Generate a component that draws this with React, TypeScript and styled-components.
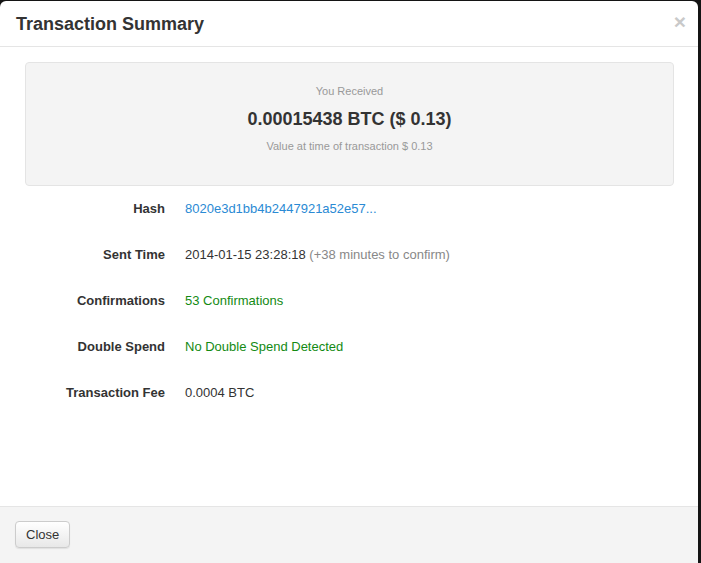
import React, { ReactElement } from "react";
import styled, { createGlobalStyle } from "styled-components";

const GlobalStyle = createGlobalStyle`
  html, body {
    margin: 0;
    padding: 0;
    background: #141414;
    font-family: "Liberation Sans", Arial, sans-serif;
    color: #333;
  }
`;

interface Row {
  label: string;
  value: string;
  tone?: "link" | "success" | "plain";
  note?: string;
}

const rows: Row[] = [
  { label: "Hash", value: "8020e3d1bb4b2447921a52e57...", tone: "link" },
  {
    label: "Sent Time",
    value: "2014-01-15 23:28:18",
    note: "(+38 minutes to confirm)",
  },
  { label: "Confirmations", value: "53 Confirmations", tone: "success" },
  { label: "Double Spend", value: "No Double Spend Detected", tone: "success" },
  { label: "Transaction Fee", value: "0.0004 BTC" },
];

const Modal = styled.div`
  margin-top: 1px;
  width: 698px;
  height: 562px;
  background: #fff;
  border-radius: 6px 6px 0 0;
  overflow: hidden;
  display: flex;
  flex-direction: column;
`;

const Header = styled.div`
  height: 45px;
  padding: 0 16px;
  border-bottom: 1px solid #e5e5e5;
  display: flex;
  align-items: center;
  justify-content: space-between;
`;

const Title = styled.h4`
  margin: 0;
  font-size: 18px;
  font-weight: bold;
  color: #333;
  line-height: 20px;
`;

const CloseX = styled.span`
  font-size: 21px;
  font-weight: bold;
  color: #c9c9c9;
  line-height: 1;
  margin-right: -4px;
  margin-top: -5px;
`;

const Body = styled.div`
  flex: 1;
  padding: 15px 24px 0 25px;
`;

const Well = styled.div`
  height: 124px;
  background: #f4f4f4;
  border: 1px solid #e4e4e4;
  border-radius: 4px;
  display: flex;
  flex-direction: column;
  align-items: center;
  padding-top: 21px;
  box-sizing: border-box;
`;

const Small = styled.div`
  font-size: 11px;
  color: #999;
  line-height: 14px;
`;

const Amount = styled.div`
  font-size: 18px;
  font-weight: bold;
  color: #333;
  line-height: 22px;
  margin: 10px 0 9px;
`;

const Details = styled.div`
  display: grid;
  grid-template-columns: 140px 1fr;
  grid-auto-rows: 46px;
  column-gap: 20px;
  font-size: 13px;
  line-height: 18px;
`;

const Label = styled.div`
  font-weight: bold;
  text-align: right;
  align-self: center;
  color: #333;
`;

const Value = styled.div<{ $tone: "link" | "success" | "plain" }>`
  align-self: center;
  color: ${({ $tone }): string =>
    $tone === "link" ? "#2a8ad4" : $tone === "success" ? "#138a13" : "#333"};
`;

const Note = styled.span`
  color: #888;
`;

const Footer = styled.div`
  height: 57px;
  border-top: 1px solid #e5e5e5;
  background: #f4f4f4;
  padding: 14px 15px 0;
  box-sizing: border-box;
`;

const Button = styled.button`
  font-family: "Liberation Sans", Arial, sans-serif;
  font-size: 13px;
  color: #333;
  height: 27px;
  padding: 0 10px;
  border: 1px solid #ccc;
  border-radius: 4px;
  background: linear-gradient(#ffffff, #e8e8e8);
  box-shadow: 0 1px 1px rgba(0, 0, 0, 0.08);
`;

const App = (): ReactElement => {
  return (
    <>
      <GlobalStyle />
      <Modal>
        <Header>
          <Title>Transaction Summary</Title>
          <CloseX>×</CloseX>
        </Header>
        <Body>
          <Well>
            <Small>You Received</Small>
            <Amount>0.00015438 BTC ($ 0.13)</Amount>
            <Small>Value at time of transaction $ 0.13</Small>
          </Well>
          <Details>
            {rows.map((row) => (
              <React.Fragment key={row.label}>
                <Label>{row.label}</Label>
                <Value $tone={row.tone ?? "plain"}>
                  {row.value}
                  {row.note && <Note> {row.note}</Note>}
                </Value>
              </React.Fragment>
            ))}
          </Details>
        </Body>
        <Footer>
          <Button>Close</Button>
        </Footer>
      </Modal>
    </>
  );
};

export default App;
